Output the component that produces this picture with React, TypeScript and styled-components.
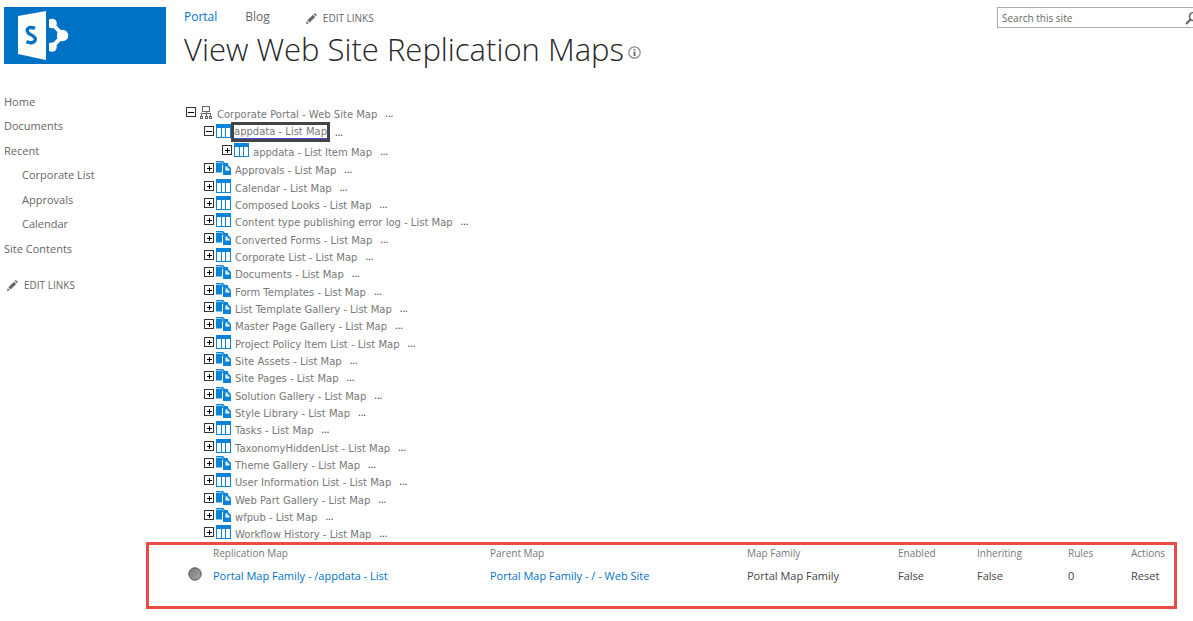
import React from "react";
import styled, { createGlobalStyle } from "styled-components";

const GlobalStyle = createGlobalStyle`
  * { box-sizing: border-box; }
  body {
    margin: 0;
    background: #fff;
    color: #444;
    font-family: "Open Sans", "Noto Sans", sans-serif;
    font-size: 11px;
    overflow-x: hidden;
  }
  a { color: inherit; text-decoration: none; }
  ul { list-style: none; margin: 0; padding: 0; }
`;

const Page = styled.div`
  padding: 7px 0 12px 4px;
`;

const Header = styled.header`
  display: flex;
  align-items: flex-start;
`;

const Logo = styled.a`
  display: block;
  flex: none;
  width: 162px;
  height: 57px;
  margin-right: 18px;
  background: #0072c6;
`;

const Heading = styled.div`
  flex: 1;
  min-width: 0;
`;

const TopNav = styled.nav`
  display: flex;
  align-items: center;
  gap: 28px;
  height: 20px;
  color: #666;
`;

const TopLink = styled.a<{ $active?: boolean }>`
  color: ${(p) => (p.$active ? "#0072c6" : "#666")};
  font-size: 12px;
  line-height: 18px;
`;

const EditButton = styled.button<{ $top?: boolean }>`
  display: flex;
  align-items: center;
  gap: 6px;
  margin: ${(p) => (p.$top ? "2px 0 0 8px" : "14px 0 0 3px")};
  padding: 0;
  border: 0;
  background: none;
  color: #666;
  font: 10px/20px "Open Sans", "Noto Sans", sans-serif;
`;

const Title = styled.h1`
  display: flex;
  align-items: center;
  gap: 4px;
  height: 44px;
  margin: 0;
  color: #262626;
  font-size: 31px;
  font-weight: 300;
  line-height: 44px;
  white-space: nowrap;
`;

const InfoIcon = styled.svg`
  margin-top: 6px;
`;

const SearchBox = styled.form`
  display: flex;
  align-items: center;
  flex: none;
  width: 196px;
  height: 21px;
  border: 1px solid #ababab;
  border-right: 0;
  overflow: hidden;
`;

const SearchInput = styled.input`
  flex: 1;
  min-width: 0;
  padding: 0 4px;
  border: 0;
  outline: 0;
  background: none;
  color: #666;
  font: 10px "Open Sans", "Noto Sans", sans-serif;
  &::placeholder { color: #666; opacity: 1; }
`;

const SearchButton = styled.button`
  flex: none;
  width: 8px;
  height: 16px;
  padding: 0;
  border: 0;
  background: none;
  overflow: hidden;
  svg { display: block; }
`;

const Body = styled.div`
  display: flex;
  align-items: flex-start;
`;

const SideNav = styled.nav`
  flex: none;
  width: 182px;
  padding-top: 19px;
  color: #666;
`;

const SideItem = styled.li<{ $sub?: boolean }>`
  height: 24px;
  padding-left: ${(p) => (p.$sub ? 18 : 0)}px;
  line-height: 24px;
  &:nth-child(2n) { height: 25px; }
`;

const Tree = styled.ul`
  flex: 1;
  min-width: 0;
  padding-top: 32px;
`;

const ListRows = styled.ul`
  > li:nth-child(3n + 1) { padding-bottom: 1px; }
`;

const Row = styled.div<{ $level: number; $tall?: boolean }>`
  display: flex;
  align-items: center;
  height: ${(p) => (p.$tall ? 19 : 17)}px;
  padding-left: ${(p) => p.$level * 18}px;
  color: #777;
  font: 10px/13px "DejaVu Sans", sans-serif;
`;

const Toggle = styled.button`
  width: 11px;
  height: 11px;
  margin-right: 1px;
  padding: 0;
  border: 0;
  background: none;
  svg { display: block; }
`;

const MapIcon = styled.svg`
  flex: none;
  width: 16px;
  height: 16px;
  margin-right: 3px;
`;

const MapLink = styled.a<{ $selected?: boolean }>`
  position: relative;
  margin-top: 4px;
  white-space: nowrap;
  ${(p) =>
    p.$selected &&
    `
    margin: 1px 0 0 -1px;
    border-bottom: 1px solid #4a4ae0;
    outline: 3px solid #444;
  `}
`;

const More = styled.button`
  margin: 2px 0 0 8px;
  padding: 0;
  border: 0;
  background: none;
  color: #333;
  font: 10px/13px "Open Sans", "Noto Sans", sans-serif;
`;

const Panel = styled.section`
  margin: 0 16px 0 142px;
  height: 67px;
  border: 3px solid #e84c45;
`;

const MapTable = styled.table`
  width: 100%;
  table-layout: fixed;
  border-collapse: collapse;
  th, td {
    padding: 0;
    text-align: left;
    white-space: nowrap;
  }
  th {
    height: 16px;
    color: #777;
    font-size: 10px;
    font-weight: 400;
    line-height: 16px;
  }
  td {
    height: 30px;
    line-height: 30px;
  }
`;

const Col = styled.col<{ $w?: number }>`
  width: ${(p) => (p.$w ? `${p.$w}px` : "auto")};
`;

const MapName = styled.a`
  color: #0072c6;
`;

const Status = styled.svg`
  display: block;
  margin: -5px 0 0 39px;
`;

const ResetButton = styled.button`
  padding: 0;
  border: 0;
  background: none;
  color: #444;
  font: inherit;
`;

type Kind = "site" | "list" | "library";

const Pencil = () => (
  <svg width="11" height="11" viewBox="0 0 11 11" aria-hidden="true">
    <path d="M0 11 .8 8 2.900 10.200ZM1.400 7.300 7 1.700 9.200 3.900 3.600 9.500ZM7.600 1.100 8.400.3Q8.900 0 9.300.4L10.500 1.600Q10.900 2.100 10.500 2.600L9.800 3.300Z" fill="#666" />
  </svg>
);

const SharePointMark = () => (
  <svg width="162" height="57" viewBox="0 0 162 57" role="img" aria-label="SharePoint">
    <g stroke="#fff" fill="none" strokeWidth="4">
      <path d="M48 16.500 59 28.500 48 40" />
    </g>
    <g fill="#fff">
      <circle cx="48" cy="16.500" r="4.800" />
      <circle cx="58.500" cy="28.500" r="5.800" />
      <circle cx="48" cy="40" r="4.800" />
      <path d="M45 21.500H48Q50 28.500 48 35.500H45Z" fill="#0072c6" />
    </g>
    <path d="M49 21.500Q54 24 53 28.500T49 35.500Z" fill="#0072c6" />
    <path d="M42 3H45V55H42Z" fill="#0072c6" />
    <path d="M14 9 42 4V53L14 47Z" fill="#fff" />
    <path d="M31 21.500Q28 20 25.500 20.700C22 22 23 25.500 26 27.200C30 29 32.300 30.500 31 33.500C29.500 36.500 25 36 22.500 34.500" fill="none" stroke="#0072c6" strokeWidth="3.400" />
  </svg>
);

const ToggleBox = ({ open }: { open?: boolean }) => (
  <svg width="11" height="11" viewBox="0 0 11 11" shapeRendering="crispEdges" aria-hidden="true">
    <rect x="0.500" y="0.500" width="9" height="9" fill="#fff" stroke="#333" />
    <path d={open ? "M2 5H8V6H2Z" : "M3 5H8V6H3ZM5 3H6V8H5Z"} fill="#000" />
  </svg>
);

const KindIcon = ({ kind }: { kind: Kind }) => {
  if (kind === "site")
    return (
      <MapIcon viewBox="0 0 16 16" aria-hidden="true">
        <g fill="none" stroke="#666" shapeRendering="crispEdges">
          <path d="M4.500 1.500H11.500V6.500H4.500ZM8.500 7V11M3.500 11V8.500H12.500V11" />
          <path d="M2.500 11.500H4.500V13.500H2.500ZM7.500 11.500H9.500V13.500H7.500ZM11.500 11.500H13.500V13.500H11.500Z" />
        </g>
      </MapIcon>
    );
  if (kind === "list")
    return (
      <MapIcon viewBox="0 0 16 16" shapeRendering="crispEdges" aria-hidden="true">
        <path d="M0 0H15V14H0Z" fill="#0a84d8" />
        <path d="M1 4H5V13H1ZM6 4H9V13H6ZM10 4H14V13H10Z" fill="#fff" />
      </MapIcon>
    );
  return (
    <MapIcon viewBox="0 0 16 16" aria-hidden="true">
      <path d="M0 0H7L9 2H12V4H6V11.500H0Z" fill="#0a84d8" />
      <path d="M0 1.500H5.500L7.500 3" fill="none" stroke="#fff" strokeWidth=".6" />
      <path d="M7 4H12L15 7V14H7Z" fill="#0a84d8" />
      <path d="M9.500 5.500H11.500V7.500H13.500V9.500H9.500Z" fill="#fff" />
    </MapIcon>
  );
};

interface NodeProps {
  name: string;
  kind: Kind;
  level: number;
  open?: boolean;
  tall?: boolean;
  selected?: boolean;
}

const MapRow = ({ name, kind, level, open, tall, selected }: NodeProps) => (
  <Row $level={level} $tall={tall}>
    <Toggle type="button" aria-expanded={!!open} aria-label={`Toggle ${name}`}>
      <ToggleBox open={open} />
    </Toggle>
    <KindIcon kind={kind} />
    <MapLink href="#" $selected={selected}>{name}</MapLink>
    <More type="button" aria-label={`Menu for ${name}`}>...</More>
  </Row>
);

const lists: [string, Kind][] = [
  ["Approvals", "library"],
  ["Calendar", "list"],
  ["Composed Looks", "list"],
  ["Content type publishing error log", "list"],
  ["Converted Forms", "library"],
  ["Corporate List", "list"],
  ["Documents", "library"],
  ["Form Templates", "library"],
  ["List Template Gallery", "library"],
  ["Master Page Gallery", "library"],
  ["Project Policy Item List", "list"],
  ["Site Assets", "library"],
  ["Site Pages", "library"],
  ["Solution Gallery", "library"],
  ["Style Library", "library"],
  ["Tasks", "list"],
  ["TaxonomyHiddenList", "list"],
  ["Theme Gallery", "library"],
  ["User Information List", "list"],
  ["Web Part Gallery", "library"],
  ["wfpub", "library"],
  ["Workflow History", "list"],
];

const sideLinks: { name: string; sub?: boolean }[] = [
  { name: "Home" },
  { name: "Documents" },
  { name: "Recent" },
  { name: "Corporate List", sub: true },
  { name: "Approvals", sub: true },
  { name: "Calendar", sub: true },
  { name: "Site Contents" },
];

export default function App() {
  return (
    <Page>
      <GlobalStyle />
      <Header>
        <Logo href="#"><SharePointMark /></Logo>
        <Heading>
          <TopNav>
            <TopLink href="#" $active>Portal</TopLink>
            <TopLink href="#">Blog</TopLink>
            <EditButton type="button" $top><Pencil />EDIT LINKS</EditButton>
          </TopNav>
          <Title>
            View Web Site Replication Maps
            <InfoIcon width="13" height="13" viewBox="0 0 13 13" role="img" aria-label="Information">
              <circle cx="6.500" cy="6.500" r="5.700" fill="none" stroke="#888" strokeWidth="1.200" />
              <path d="M6.500 3V4.600M6.500 5.500V10" fill="none" stroke="#666" strokeWidth="1.800" />
            </InfoIcon>
          </Title>
        </Heading>
        <SearchBox role="search">
          <SearchInput type="text" aria-label="Search this site" placeholder="Search this site" />
          <SearchButton type="button" aria-label="Search">
            <svg width="16" height="16" viewBox="0 0 16 16">
              <circle cx="8.500" cy="6.500" r="4" fill="none" stroke="#666" strokeWidth="1.600" />
              <path d="M5.700 9.300 1 14" stroke="#666" strokeWidth="2.200" />
            </svg>
          </SearchButton>
        </SearchBox>
      </Header>
      <Body>
        <SideNav>
          <ul>
            {sideLinks.map((l) => (
              <SideItem key={l.name} $sub={l.sub}><a href="#">{l.name}</a></SideItem>
            ))}
          </ul>
          <EditButton type="button"><Pencil />EDIT LINKS</EditButton>
        </SideNav>
        <Tree>
          <li>
            <MapRow name="Corporate Portal - Web Site Map" kind="site" level={0} open tall />
            <ul>
              <li>
                <MapRow name="appdata - List Map" kind="list" level={1} open tall selected />
                <ul>
                  <li><MapRow name="appdata - List Item Map" kind="list" level={2} tall /></li>
                </ul>
              </li>
            </ul>
            <ListRows>
              {lists.map(([name, kind]) => (
                <li key={name}><MapRow name={`${name} - List Map`} kind={kind} level={1} /></li>
              ))}
            </ListRows>
          </li>
        </Tree>
      </Body>
      <Panel>
        <MapTable>
          <colgroup>
            <Col $w={64} />
            <Col $w={277} />
            <Col />
            <Col $w={151} />
            <Col $w={79} />
            <Col $w={91} />
            <Col $w={63} />
            <Col $w={43} />
          </colgroup>
          <thead>
            <tr>
              <th aria-label="Status" />
              <th>Replication Map</th>
              <th>Parent Map</th>
              <th>Map Family</th>
              <th>Enabled</th>
              <th>Inheriting</th>
              <th>Rules</th>
              <th>Actions</th>
            </tr>
          </thead>
          <tbody>
            <tr>
              <td>
                <Status width="14" height="14" viewBox="0 0 14 14" role="img" aria-label="Disabled">
                  <defs>
                    <linearGradient id="ball" x1="0" y1="0" x2="1" y2="1">
                      <stop offset="0" stopColor="#777" />
                      <stop offset="1" stopColor="#aaa" />
                    </linearGradient>
                  </defs>
                  <circle cx="7" cy="7" r="6.200" fill="url(#ball)" stroke="#555" />
                </Status>
              </td>
              <td><MapName href="#">Portal Map Family - /appdata - List</MapName></td>
              <td><MapName href="#">Portal Map Family - / - Web Site</MapName></td>
              <td>Portal Map Family</td>
              <td>False</td>
              <td>False</td>
              <td>0</td>
              <td><ResetButton type="button">Reset</ResetButton></td>
            </tr>
          </tbody>
        </MapTable>
      </Panel>
    </Page>
  );
}
